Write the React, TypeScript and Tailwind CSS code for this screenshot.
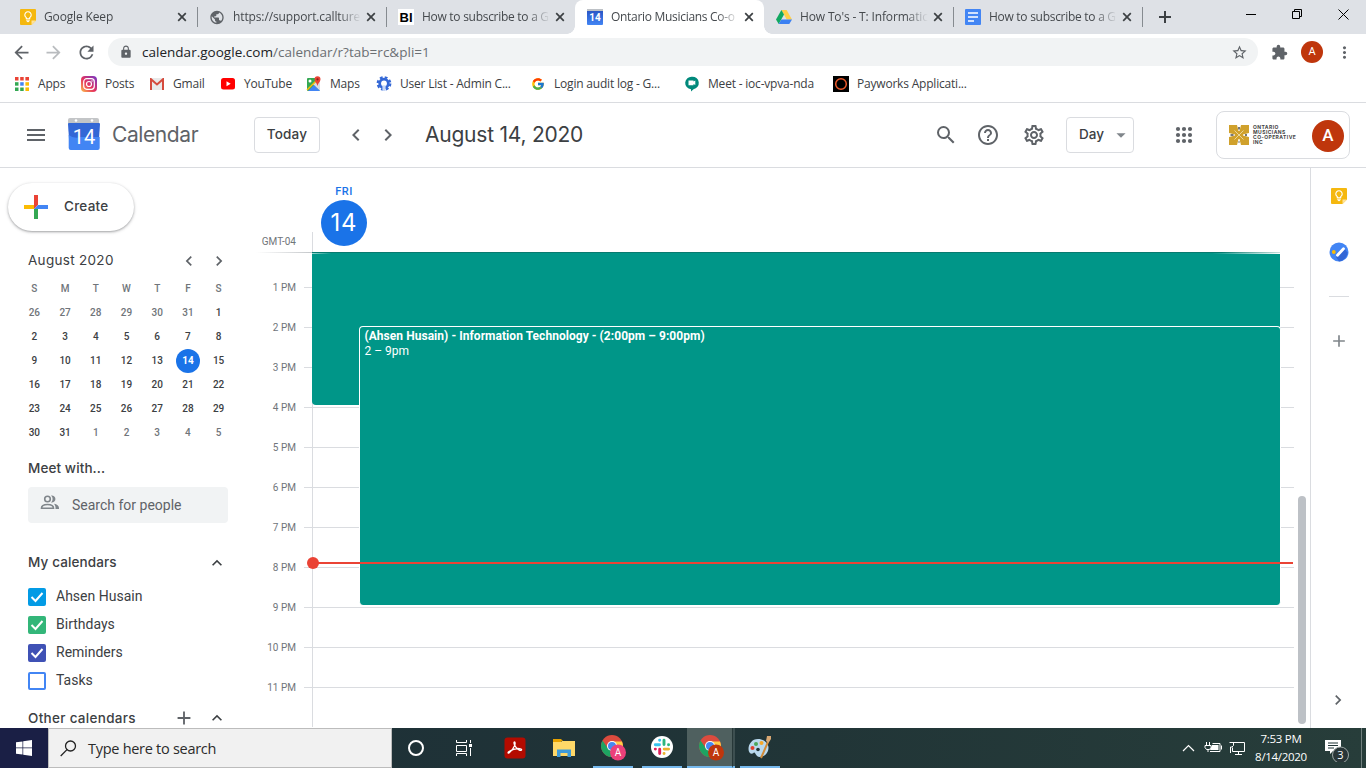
import React from "react";
import {
  MdSearch, MdHelpOutline, MdOutlineSettings, MdMenu, MdChevronLeft, MdChevronRight,
  MdKeyboardArrowUp, MdAdd, MdStarBorder, MdExtension, MdLock, MdArrowBack,
  MdArrowForward, MdRefresh, MdMoreVert, MdPublic, MdArrowDropDown,
} from "react-icons/md";
import { FcGoogle } from "react-icons/fc";

function KeepIcon({ size = 16 }: { size?: number }) {
  return (
    <svg width={size} height={size} viewBox="0 0 16 16">
      <path d="M1 0h14a1 1 0 0 1 1 1v10.5L11.5 16H1a1 1 0 0 1-1-1V1a1 1 0 0 1 1-1z" fill="#f5b80f" />
      <path d="M16 11.5h-4.5V16z" fill="#fde29a" />
      <path d="M6.3 9.8V8.6A3.2 3.2 0 1 1 9.7 8.6V9.8z" fill="none" stroke="#fff" strokeWidth="1.1" />
      <path d="M6.2 11.2h3.6M6.8 12.6h2.4" stroke="#fff" strokeWidth="1" />
    </svg>
  );
}

function BiIcon() {
  return <span className="flex h-4 w-4 items-center justify-center bg-white font-['Liberation_Sans'] text-[13px] font-bold leading-none text-black">BI</span>;
}

function CalFavicon() {
  return (
    <span className="flex h-4 w-4 flex-col">
      <span className="h-[2px] bg-[#bdc1c6]" />
      <span className="flex h-[14px] items-center justify-center rounded-b-[1px] bg-gradient-to-b from-[#2a56c6] to-[#4285f4] font-['Roboto'] text-[10px] font-bold leading-none text-white">14</span>
    </span>
  );
}

function DriveIcon() {
  return (
    <svg width="16" height="16" viewBox="0 0 16 16">
      <path d="M5.4 1h5.2L16 10.4h-5.3z" fill="#ffcf48" />
      <path d="M5.4 1 8 5.6 2.7 15 0 10.4z" fill="#11a861" />
      <path d="M5.3 10.4H16L13.3 15H2.7z" fill="#3b80f2" />
    </svg>
  );
}

function DocsIcon() {
  return (
    <svg width="16" height="16" viewBox="0 0 16 16">
      <rect width="16" height="16" rx="1" fill="#4285f4" />
      <path d="M3 4h10M3 8h10M3 12h6" stroke="#fff" strokeWidth="1.6" />
    </svg>
  );
}

const tabs = [
  { icon: <KeepIcon />, title: "Google Keep", space: "tracking-[-0.15px]" },
  { icon: <MdPublic size={17} color="#5f6368" />, title: "https://support.callture.", space: "tracking-[-0.12px]" },
  { icon: <BiIcon />, title: "How to subscribe to a G", space: "tracking-[-0.28px]" },
  { icon: <CalFavicon />, title: "Ontario Musicians Co-o", active: true, space: "tracking-[-0.3px]" },
  { icon: <DriveIcon />, title: "How To's - T: Informatic", space: "tracking-[-0.15px]" },
  { icon: <DocsIcon />, title: "How to subscribe to a G", space: "tracking-[-0.28px]" },
];

function TabStrip() {
  return (
    <div className="flex h-[34px] bg-[#dee1e6] pl-2">
      {tabs.map((t, i) => (
        <div key={i} className={`relative flex w-[189px] shrink-0 items-center pl-3 ${t.active ? "rounded-t-lg bg-white" : ""}`}>
          <span className="flex w-4 justify-center">{t.icon}</span>
          <span className={`ml-2 w-[130px] whitespace-nowrap text-[12px] text-[#45494d] [mask-image:linear-gradient(to_right,black_106px,transparent_128px)] ${t.space}`}>{t.title}</span>
          <svg width="14" height="14" viewBox="0 0 14 14" className="ml-[1px]"><path d="m3.200 3.200 7.600 7.600m0-7.600-7.600 7.600" stroke="#3c4043" strokeWidth="1.700" /></svg>
          {!t.active && i !== 2 && <span className="absolute right-[-1px] top-[7px] h-5 w-px bg-[#868b90]" />}
          {t.active && (
            <>
              <span className="absolute -left-2 bottom-0 h-2 w-2 bg-[radial-gradient(circle_at_0_0,#dee1e6_7.5px,white_8px)]" />
              <span className="absolute -right-2 bottom-0 h-2 w-2 bg-[radial-gradient(circle_at_100%_0,#dee1e6_7.5px,white_8px)]" />
            </>
          )}
        </div>
      ))}
      <svg width="224" height="34" viewBox="0 0 224 34" fill="none">
        <path d="M17 17h12M23 11v12" stroke="#3c4043" strokeWidth="2" />
        <path d="M104 14.5h10" stroke="#000" />
        <path d="M150.500 11.500h7v7h-7zM152.500 11v-1.500h7v7h-1.500" stroke="#000" />
        <path d="m196.500 9.500 10 10m0-10-10 10" stroke="#000" />
      </svg>
    </div>
  );
}

function Toolbar() {
  return (
    <div className="flex h-9 items-center bg-white">
      <MdArrowBack size={21} color="#5f6368" className="ml-[11px]" />
      <MdArrowForward size={21} color="#b9bcbf" className="ml-[11px]" />
      <MdRefresh size={21} color="#5f6368" className="ml-[12px]" />
      <div className="ml-[11px] flex h-7 w-[1150px] items-center rounded-full bg-[#f1f3f4] pl-[11px] pr-[10px]">
        <MdLock size={14} color="#5f6368" />
        <span className="ml-[9px] flex-1 whitespace-nowrap text-[13.500px] tracking-[0.020px] text-[#6b6f73]"><span className="text-[#202124]">calendar.google.com</span>/calendar/r?tab=rc&amp;pli=1</span>
        <MdStarBorder size={17} color="#5f6368" />
      </div>
      <MdExtension size={17} color="#5f6368" className="ml-[13px]" />
      <span className="ml-[13px] flex h-[22px] w-[22px] items-center justify-center rounded-full bg-[#bf360c] font-['Roboto'] text-[11px] text-white">A</span>
      <MdMoreVert size={19} color="#5f6368" className="ml-[12px]" />
    </div>
  );
}

const bookmarks = [
  {
    w: "w-[67px]", label: "Apps", icon: (
      <svg width="14" height="14" viewBox="0 0 14 14">
        <path d="M0 0h3.500v3.500H0zM5.200 0h3.500v3.500H5.200zM10.400 0H14v3.500h-3.600z" fill="#ea4335" />
        <path d="M0 5.200h3.500v3.500H0z" fill="#34a853" /><path d="M5.200 5.200h3.500v3.500H5.200z" fill="#4285f4" /><path d="M10.400 5.200H14v3.500h-3.600z" fill="#fbbc05" />
        <path d="M0 10.400h3.500V14H0zM5.200 10.400h3.500V14H5.200z" fill="#34a853" /><path d="M10.400 10.400H14V14h-3.600z" fill="#fbbc05" />
      </svg>
    ),
  },
  {
    w: "w-[68px]", label: "Posts", icon: (
      <svg width="16" height="16" viewBox="0 0 16 16" fill="none">
        <defs><linearGradient id="insta" x1="0" y1="1" x2="1" y2="0"><stop stopColor="#fdc04b" /><stop offset=".45" stopColor="#e5325e" /><stop offset="1" stopColor="#7138c9" /></linearGradient></defs>
        <rect width="16" height="16" rx="4" fill="url(#insta)" />
        <rect x="2.700" y="2.700" width="10.600" height="10.600" rx="3" stroke="#fff" strokeWidth="1.200" />
        <circle cx="8" cy="8" r="2.500" stroke="#fff" strokeWidth="1.200" /><circle cx="11" cy="5" r=".7" fill="#fff" />
      </svg>
    ),
  },
  {
    w: "w-[71px]", label: "Gmail", icon: (
      <svg width="16" height="12" viewBox="0 0 16 12" fill="none">
        <path d="M1 0h14v12H1z" fill="#e9e9e9" /><path d="M2 12V1.200L8 6.500l6-5.300V12" stroke="#d54b3d" strokeWidth="2" />
      </svg>
    ),
  },
  {
    w: "w-[86px]", label: "YouTube", icon: (
      <svg width="16" height="12" viewBox="0 0 16 12"><rect x="1" width="14" height="11.500" rx="2.500" fill="#f00" /><path d="m6.500 3.200 4.200 2.500-4.200 2.500z" fill="#fff" /></svg>
    ),
  },
  {
    w: "w-[70px]", label: "Maps", icon: (
      <svg width="16" height="16" viewBox="0 0 16 16">
        <rect x="1" y="2" width="13" height="13" rx="1" fill="#34a853" /><path d="M14 2v13L7 8.500z" fill="#dadce0" />
        <path d="m2 15 6-6 6 6z" fill="#4285f4" /><path d="m1 14 12-12" stroke="#fbbc05" strokeWidth="1.500" />
        <circle cx="4" cy="5" r="1.500" fill="#fff" /><path d="M11.500 10C11 7 8.500 6 8.500 3.300a3 3 0 0 1 6 0C14.500 6 12 7 11.500 10z" fill="#ea4335" /><circle cx="11.500" cy="3.300" r="1.100" fill="#8c2119" />
      </svg>
    ),
  },
  {
    w: "w-[154px]", label: "User List - Admin C...", icon: (
      <svg width="16" height="16" viewBox="0 0 16 16" fill="none">
        <circle cx="8" cy="7.500" r="4.300" stroke="#3367d6" strokeWidth="2.800" />
        <circle cx="8" cy="7.500" r="6.300" stroke="#3367d6" strokeWidth="2.200" strokeDasharray="2.800 2.150" />
        <path d="M8 9v6" stroke="#c6d7f7" strokeWidth="3.200" /><circle cx="8" cy="7.300" r="2.300" fill="#fff" />
      </svg>
    ),
  },
  { w: "w-[154px]", label: "Login audit log - G...", icon: <FcGoogle size={14} /> },
  {
    w: "w-[149px]", label: "Meet - ioc-vpva-nda", icon: (
      <svg width="16" height="16" viewBox="0 0 16 16"><path d="M8 .7a6.300 6.300 0 0 1 1.500 12.500L7 15.500V13.300A6.300 6.300 0 0 1 8 .7z" fill="#00897b" /><path d="M4.500 4.500h5v1l1.800-1v4.600L9.500 8v1.200h-5z" fill="#fff" /></svg>
    ),
  },
  {
    w: "w-[160px]", label: "Payworks Applicati...", icon: (
      <svg width="16" height="16" viewBox="0 0 16 16"><rect width="16" height="16" fill="#000" /><circle cx="8" cy="8" r="5.300" fill="none" stroke="#ee5a2b" strokeWidth="1.500" /></svg>
    ),
  },
];

function Bookmarks() {
  return (
    <div className="flex h-[33px] items-center border-b border-[#dadce0] bg-white pb-[5px] pl-[14px]">
      {bookmarks.map((b) => (
        <div key={b.label} className={`flex shrink-0 items-center gap-2 whitespace-nowrap ${b.w}`}>
          <span className="flex w-4 justify-center">{b.icon}</span>
          <span className="text-[12px] tracking-[-0.200px] text-[#3c4043]">{b.label}</span>
        </div>
      ))}
    </div>
  );
}

function OrgLogo() {
  return (
    <div className="flex items-center gap-1">
      <svg width="20" height="20" viewBox="0 0 20 20">
        <path d="M0 0h8l1.500 6h1L12 0h8v8l-6 1.500v1l6 1.500v8h-8l-1.500-6h-1L8 20H0v-8l6-1.500v-1L0 8z" fill="#d0a12c" />
        <path d="m5.500 5.500 9 9m0-9-9 9" stroke="#f3e3b5" strokeWidth=".8" />
        <path d="M9 2h2v2.500H9zM1.500 9h3v2h-3zM16 9h2v2h-2zM9.500 16h1v2h-1z" fill="#777" />
      </svg>
      <div className="w-[46px] whitespace-nowrap font-['Inter'] text-[5px] font-bold leading-[5px] tracking-[0.430px] text-[#444]">
        <div>ONTARIO</div><div>MUSICIANS</div><div>CO-OPERATIVE</div><div>INC</div>
      </div>
    </div>
  );
}

function AppHeader() {
  return (
    <header className="flex h-[65px] items-center border-b border-[#dadce0] bg-white font-['Inter'] text-[#3c4043]">
      <MdMenu size={24} color="#5f6368" className="ml-6" />
      <svg width="34" height="34" viewBox="0 0 34 34" className="-mt-[2px] ml-[19px]">
        <path d="M3 1h27a2 2 0 0 1 2 2v5H1V3a2 2 0 0 1 2-2z" fill="#c3c5c7" />
        <circle cx="9" cy="3.500" r="1.300" fill="#fff" /><circle cx="25" cy="3.500" r="1.300" fill="#fff" />
        <path d="M1 7q0-1 1-1h30q1 0 1 1l-1 15H2z" fill="#3367d6" />
        <path d="M1.700 18q5 4 12 2h19v11a2 2 0 0 1-2 2h-27a2 2 0 0 1-2-2z" fill="#4285f4" />
        <text x="17" y="27" textAnchor="middle" fontFamily="Roboto" fontSize="20" fill="#fff">14</text>
      </svg>
      <span className="ml-[11px] w-[142px] text-[21px] tracking-[-0.400px] text-[#5f6368]">Calendar</span>
      <button className="flex h-9 w-[66px] items-center justify-center rounded border border-[#dadce0] pb-[2px] text-[13.500px] font-medium tracking-[0.200px]">Today</button>
      <MdChevronLeft size={24} color="#5f6368" className="ml-6" />
      <MdChevronRight size={24} color="#5f6368" className="ml-2" />
      <span className="ml-[25px] flex-1 text-[21px] tracking-[-0.230px]">August 14, 2020</span>
      <MdSearch size={24} color="#5f6368" />
      <MdHelpOutline size={24} color="#5f6368" className="ml-[18px]" />
      <MdOutlineSettings size={24} color="#5f6368" className="ml-[22px]" />
      <button className="ml-5 flex h-9 w-[68px] items-center justify-between rounded border border-[#dadce0] pb-[1px] pl-3 pr-[1px] text-[13.500px] font-medium">Day<MdArrowDropDown size={22} color="#80868b" /></button>
      <svg width="24" height="24" viewBox="0 0 24 24" className="ml-[38px]" fill="#5f6368">
        {[6, 12, 18].map((y) => [6, 12, 18].map((x) => <circle key={`${x}-${y}`} cx={x} cy={y} r="2.100" />))}
      </svg>
      <div className="ml-5 mr-4 flex h-12 w-[134px] items-center justify-between rounded-lg border border-[#dadce0] pl-3 pr-[5px]">
        <OrgLogo />
        <span className="mt-[1px] flex h-8 w-8 items-center justify-center rounded-full bg-[#bf360c] pt-[1px] font-['Roboto'] text-[17px] font-medium text-white">A</span>
      </div>
    </header>
  );
}

const monthDays = [26, 27, 28, 29, 30, 31, 1, 2, 3, 4, 5, 6, 7, 8, 9, 10, 11, 12, 13, 14, 15, 16, 17, 18, 19, 20, 21, 22, 23, 24, 25, 26, 27, 28, 29, 30, 31, 1, 2, 3, 4, 5];
const calendars = [
  { name: "Ahsen Husain", box: "bg-[#039be5] border-[#039be5]", on: true },
  { name: "Birthdays", box: "bg-[#33b679] border-[#33b679]", on: true },
  { name: "Reminders", box: "bg-[#3f51b5] border-[#3f51b5]", on: true },
  { name: "Tasks", box: "bg-white border-[#4285f4]", on: false },
];

function Sidebar() {
  return (
    <aside className="h-[560px] w-[256px] shrink-0 overflow-hidden font-['Roboto'] text-[#3c4043]">
      <button className="ml-2 mt-[15px] flex h-12 w-[126px] items-center rounded-full bg-white pl-4 font-['Inter'] text-[13.500px] font-medium tracking-[0.250px] shadow-[0_1px_2px_rgba(60,64,67,0.35),0_1px_3px_1px_rgba(60,64,67,0.13)]">
        <svg width="24" height="24" viewBox="0 0 24 24">
          <path d="M10 0h4v10l-4 4z" fill="#ea4335" /><path d="M0 10h10v4H0z" fill="#fbbc04" /><path d="M14 10h10v4H10z" fill="#4285f4" /><path d="M10 14h4v10h-4z" fill="#34a853" />
        </svg>
        <span className="ml-4 pb-[2px]">Create</span>
      </button>
      <div className="ml-7 mt-[17px] flex h-6 w-[203px] items-center font-['Inter'] text-[13.500px] tracking-[0.300px]">
        <span className="flex-1">August 2020</span>
        <MdChevronLeft size={20} color="#5f6368" className="mt-[2px]" /><MdChevronRight size={20} color="#5f6368" className="ml-[10px] mr-[2px] mt-[2px]" />
      </div>
      <div className="ml-[19px] mt-[5px] grid w-[215px] grid-cols-7 text-center text-[10px] font-medium leading-6">
        {["S", "M", "T", "W", "T", "F", "S"].map((d, i) => <span key={i} className="text-[#70757a]">{d}</span>)}
        {monthDays.map((d, i) => (
          <span key={i} className={i === 19 ? "mx-auto w-6 rounded-full bg-[#1a73e8] font-bold text-white" : i < 6 || i > 36 ? "text-[#70757a]" : "text-[#3c4043]"}>{d}</span>
        ))}
      </div>
      <div className="ml-7 mt-[11px] h-6 font-['Inter'] text-[13.500px] font-medium leading-6 tracking-[0.100px]">Meet with...</div>
      <div className="ml-7 mt-[7px] flex h-9 w-[200px] items-center rounded bg-[#f1f3f4] pl-3 text-[14px] text-[#5f6368]">
        <svg width="20" height="20" viewBox="0 0 20 20" className="mb-1" fill="none">
          <circle cx="7.500" cy="6" r="2.800" stroke="#80868b" strokeWidth="1.600" />
          <path d="M1.500 15.200c0-5 12-5 12 0z" stroke="#80868b" strokeWidth="1.600" />
          <path d="M11 9.500a4.600 4.600 0 0 0 0-7 3.600 3.600 0 1 1 0 7zM14 10.800c3 .6 5 2 5 4.200v1h-3.500c.2-2-.2-3.700-1.500-5.200z" fill="#80868b" />
        </svg>
        <span className="ml-3">Search for people</span>
      </div>
      <div className="ml-7 mt-[27px] flex h-6 w-[200px] items-center justify-between font-['Inter'] text-[13.500px] font-medium tracking-[0.120px]">
        My calendars<MdKeyboardArrowUp size={20} color="#3c4043" className="mr-[1px] mt-[1px]" />
      </div>
      <div className="ml-7 mt-[9px] flex flex-col">
        {calendars.map((c) => (
          <div key={c.name} className="flex h-7 items-center gap-[10px]">
            <span className={`flex h-[18px] w-[18px] items-center justify-center rounded-[2px] border-2 ${c.box}`}>
              {c.on && <svg width="14" height="12" viewBox="0 0 14 12" className="shrink-0"><path d="m1.500 6 4 4 7-8" fill="none" stroke="#fff" strokeWidth="2" /></svg>}
            </span>
            <span className="pb-[2px] text-[14px]">{c.name}</span>
          </div>
        ))}
      </div>
      <div className="ml-7 mt-[11px] flex h-6 w-[200px] items-center font-['Inter'] text-[13.500px] font-medium tracking-[0.300px]">
        <span className="flex-1">Other calendars</span>
        <MdAdd size={22} color="#5f6368" className="-mt-[1px]" /><MdKeyboardArrowUp size={20} color="#3c4043" className="ml-[12px] mr-[1px]" />
      </div>
    </aside>
  );
}

const hours = ["1 PM", "2 PM", "3 PM", "4 PM", "5 PM", "6 PM", "7 PM", "8 PM", "9 PM", "10 PM", "11 PM"];

function DayView() {
  return (
    <main className="flex h-[560px] w-[1038px] shrink-0 flex-col font-['Roboto']">
      <div className="flex h-[84px] shrink-0">
        <div className="flex w-14 items-end justify-end pb-[3px] pr-4 text-[10px] text-[#70757a]"><span className="whitespace-nowrap">GMT-04</span></div>
        <div className="mt-auto h-5 w-px bg-[#dadce0]" />
        <div className="ml-2 flex w-[46px] flex-col items-center">
          <span className="mt-[16px] text-[11px] font-medium leading-[15px] tracking-[0.400px] text-[#1a73e8]">FRI</span>
          <span className="mt-[1px] flex h-[46px] w-[46px] items-center justify-center rounded-full bg-[#1a73e8] font-['Inter'] text-[24px] tracking-[0.800px] text-white">14</span>
        </div>
      </div>
      <div className="relative min-h-0 flex-1 overflow-hidden">
        <div className="h-[35px] pl-14"><div className="h-full border-l border-[#dadce0]" /></div>
        {hours.map((h) => (
          <div key={h} className="flex h-10">
            <span className="-mt-[7px] h-[14px] w-10 whitespace-nowrap text-right text-[10px] leading-[15px] text-[#70757a]">{h}</span>
            <span className="ml-2 w-2 border-t border-[#dadce0]" />
            <span className="flex-1 border-l border-t border-[#dadce0]" />
          </div>
        ))}
        <div className="absolute left-[56px] top-0 h-[153px] w-[968px] rounded-bl bg-[#009688]" />
        <div className="absolute left-[103px] top-[74px] h-[279px] w-[922px] rounded border-l border-r border-t border-white bg-[#009688] pl-[4.500px] pt-[2px] text-[12px] leading-[15px] text-white">
          <div className="whitespace-nowrap font-bold tracking-[0.045px]">(Ahsen Husain) - Information Technology - (2:00pm – 9:00pm)</div>
          <div>2 – 9pm</div>
        </div>
        <div className="absolute left-[57px] top-[310px] h-[2px] w-[980px] bg-[#ea4335]" />
        <div className="absolute left-[51px] top-[305px] h-3 w-3 rounded-full bg-[#ea4335]" />
        <div className="absolute left-0 top-0 h-px w-14 bg-gradient-to-r from-transparent to-[#c4c7ca]" />
        <div className="absolute left-[56px] top-0 h-px w-[968px] bg-[linear-gradient(to_right,#087a6f_94%,#c9dedc)]" />
        <div className="absolute left-[56px] top-[1px] h-px w-[968px] bg-[linear-gradient(to_right,rgba(255,255,255,0.6),transparent_2%,transparent_93%,white)]" />
      </div>
    </main>
  );
}

function SidePanel() {
  return (
    <div className="flex w-14 flex-col items-center border-l border-[#dadce0] pt-5">
      <KeepIcon />
      <svg width="20" height="20" viewBox="0 0 20 20" className="mt-[38px]">
        <circle cx="10" cy="10" r="9.500" fill="#4285f4" /><path d="m9 12 6-6 3.500 4.500A9.500 9.500 0 0 1 10 19.500L7 15z" fill="#3367d6" />
        <circle cx="4.800" cy="10" r="1.900" fill="#fbbc04" /><path d="m8.500 13.300 6-6.500" stroke="#fff" strokeWidth="2.800" strokeLinecap="round" />
      </svg>
      <span className="mt-[34px] h-px w-5 bg-[#dadce0]" />
      <MdAdd size={20} color="#80868b" className="mt-[34px]" />
      <MdChevronRight size={20} color="#5f6368" className="mb-[18px] mr-[2px] mt-auto" />
    </div>
  );
}

function ChromeIcon({ badge }: { badge: string }) {
  return (
    <svg width="26" height="26" viewBox="0 0 26 26" className="overflow-visible">
      <circle cx="12" cy="12" r="11" fill="#dc4b3e" />
      <path d="M2.500 6.500A11 11 0 0 0 11 23l5-8.500H8z" fill="#1da462" />
      <path d="M11 23A11 11 0 0 0 22 7.500H12l4.500 7z" fill="#ffcd46" />
      <circle cx="12" cy="12" r="5" fill="#fff" /><circle cx="12" cy="12" r="4" fill="#4688f1" />
      <circle cx="18" cy="18.500" r="8" fill={badge} />
      <text x="18" y="22" fontFamily="Roboto" fontSize="10" textAnchor="middle" fill="#fff">A</text>
    </svg>
  );
}

function SlackIcon() {
  return (
    <svg width="22" height="22" viewBox="0 0 22 22">
      <circle cx="11" cy="11" r="11" fill="#fff" />
      <g strokeWidth="2.900" strokeLinecap="round">
        <path d="M4.300 8.800h4.200M8.600 4.300h.1" stroke="#36c5f0" />
        <path d="M13 4.300v4.200M17.500 8.800h.1" stroke="#2eb67d" />
        <path d="M13.200 13.100h4.400M13 17.500h.1" stroke="#ecb22e" />
        <path d="M8.700 13.200v4.300M4.300 13.100h.1" stroke="#e01e5a" />
      </g>
    </svg>
  );
}

function Taskbar() {
  return (
    <div className="flex h-10 bg-[linear-gradient(to_right,#1c2e37,#213537_60%,#273d3a)] text-white">
      <div className="flex w-12 items-center justify-center bg-[#1a1f45]">
        <svg width="16" height="16" viewBox="0 0 16 16" fill="#fff"><path d="M0 2.300 6.500 1.400V7.500H0zM7.200 1.300 16 0v7.500H7.200zM0 8.300h6.500v6.300L0 13.700zM7.200 8.300H16V16l-8.800-1.300z" /></svg>
      </div>
      <div className="flex w-[344px] items-center border border-[#bcbcbc] bg-[#f1f1f1] pl-[11px] text-[#2b2b2b]">
        <svg width="17" height="17" viewBox="0 0 17 17" fill="none" stroke="#222" strokeWidth="1.300"><circle cx="10.500" cy="6" r="5" /><path d="M7 9.600.7 16" /></svg>
        <span className="ml-[11px] pt-[1px] text-[14.500px] tracking-[-0.280px]">Type here to search</span>
      </div>
      <div className="flex w-[47px] items-center justify-center"><span className="h-4 w-4 rounded-full border-2 border-white" /></div>
      <div className="ml-[1px] flex w-12 items-center justify-center">
        <svg width="16" height="16" viewBox="0 0 16 16" fill="none" stroke="#fff"><path d="M.5 0v2.500h10V0M.5 5.500h10v6H.5zM.5 16v-2.500h10V16M14.500 0v3M14.500 8v8" /><path d="M13 4h3v3h-3z" fill="#fff" stroke="none" /></svg>
      </div>
      <div className="flex w-[54px] items-center justify-center">
        <svg width="22" height="22" viewBox="0 0 22 22"><rect x=".5" y=".5" width="21" height="21" rx="3" fill="#b30b00" /><path d="M10.500 5c1.500 0 .5 6-5.500 11-1 .5-1.500-.5 0-1.500 4-2.500 9-3.500 12-2.500 1.500 1 0 2-2 1-4-2-6-8-4.500-8z" fill="none" stroke="#fff" strokeWidth="1.300" /></svg>
      </div>
      <div className="flex w-[44px] items-center justify-center">
        <svg width="22" height="20" viewBox="0 0 22 20"><path d="M0 1h8l2 2h-2v3H0z" fill="#e8a200" /><path d="M0 4h8l1-1h13v15H0z" fill="#ffd868" /><path d="M4 11.500h14V19h-3.500v-4h-7v4H4z" fill="#3f9bd8" /></svg>
      </div>
      <div className="ml-[7px] flex h-full w-10 items-center justify-center border-b-2 border-[#76b9ed]"><ChromeIcon badge="#ec407a" /></div>
      <div className="ml-[9px] flex w-10 items-center justify-center border-b-2 border-[#76b9ed]"><SlackIcon /></div>
      <div className="ml-[5px] flex w-[45px] items-center justify-center border-b-2 border-[#76b9ed] bg-[#4f605f] pl-[3px]"><ChromeIcon badge="#bf360c" /></div>
      <div className="w-[3px] border-b-2 border-l border-[#76b9ed] border-l-[#273838] bg-[#3d4f50]" />
      <div className="ml-[5px] flex w-10 items-center justify-center border-b-2 border-[#76b9ed]">
        <svg width="24" height="24" viewBox="0 0 24 24">
          <path d="M10 4C4 4 .5 9 .5 14c0 4 3 6 5 4s2 4 6 4c6 0 9-5 9-9.500S16 4 10 4z" fill="#b9d9ee" />
          <circle cx="4.500" cy="13" r="2" fill="#e0402f" /><circle cx="8" cy="9" r="2" fill="#4ba75b" /><circle cx="13.500" cy="8" r="2" fill="#f5a72a" /><circle cx="10" cy="14.500" r="1.800" fill="#203438" />
          <path d="m13 23 7-16" stroke="#d18b39" strokeWidth="2" /><path d="m18 6 1-5h4v3l-2.500 4z" fill="#d9a873" />
        </svg>
      </div>
      <div className="flex-1" />
      <svg width="64" height="40" viewBox="0 0 64 40" fill="none" stroke="#fff" className="mr-[6px]">
        <path d="m2 23 5.500-5.500L13 23" strokeWidth="1.200" />
        <path d="M31.500 15.500h7.500v8H29M40.500 17.500v4M25.500 14v3M28.500 14v3M24 17.500h6v2l-1.500 2h-3l-1.500-2zM27 22v2" /><path d="M31 17h6.500v5H29z" fill="#fff" stroke="none" />
        <path d="M51.500 14.500h12v9h-12v-4M48.500 14.500h4v3l-1.500 1.500h-1.500v6M57.500 24v3M54 26.500h7" />
      </svg>
      <div className="w-[60px] whitespace-nowrap pt-[2px] text-center text-[11.500px] leading-[18px] tracking-[-0.300px]"><div>7:53 PM</div><div>8/14/2020</div></div>
      <div className="ml-[14px] mr-[11px] flex w-[25px] items-center">
        <svg width="25" height="28" viewBox="0 0 25 28"><path d="M0 6h16v11H8l-3 3v-3H0z" fill="#fff" /><path d="M3 9h10M3 11.500h10M3 14h6" stroke="#213537" /><circle cx="15.500" cy="21" r="8" fill="#293638" stroke="#9ca6a5" /><text x="15.500" y="25" fontFamily="Open Sans" fontSize="11" textAnchor="middle" fill="#fff">3</text></svg>
      </div>
      <div className="w-[5px] border-l border-[#71807e]" />
    </div>
  );
}

export default function App() {
  return (
    <div className="flex h-[768px] w-[1366px] flex-col overflow-hidden bg-white font-['Open_Sans',sans-serif]">
      <TabStrip />
      <Toolbar />
      <Bookmarks />
      <AppHeader />
      <div className="flex h-[560px]">
        <Sidebar />
        <DayView />
        <div className="flex w-4 flex-col pl-1"><span className="mt-[328px] h-[228px] w-2 rounded-full bg-[#bdc1c6]" /></div>
        <SidePanel />
      </div>
      <Taskbar />
    </div>
  );
}
